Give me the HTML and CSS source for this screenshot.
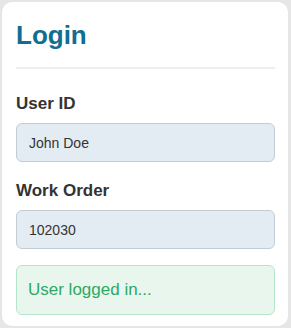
FILE: index.html
```html
<!DOCTYPE html>
<html lang="en">
<head>
    <meta charset="UTF-8">
    <meta name="viewport" content="width=device-width, initial-scale=1.0">
    <title>Login</title>
    <link rel="stylesheet" href="styles.css">
</head>
<body>
    <div class="card">
        <h1 class="title">Login</h1>

        <label class="field-label" for="user-id">User ID</label>
        <input class="field-input" id="user-id" type="text" value="John Doe">

        <label class="field-label" for="work-order">Work Order</label>
        <input class="field-input" id="work-order" type="text" value="102030">

        <div class="status">User logged in...</div>
    </div>
</body>
</html>
```

FILE: styles.css
```css
:root {
    --title-blue: #0f6e91;
    --text-dark: #333333;
    --input-bg: #e4ecf3;
    --input-border: #c3ccd4;
    --ok-bg: #e9f6ed;
    --ok-border: #b5e6c9;
    --ok-text: #2ea866;
}

* {
    box-sizing: border-box;
    margin: 0;
    padding: 0;
}

body {
    font-family: "Liberation Sans", Arial, sans-serif;
    background-color: #e6e6e6;
    padding: 2px 3px 2px 2px;
    color: var(--text-dark);
}

.card {
    background-color: #ffffff;
    border-radius: 10px;
    padding: 18px 13px 11px 14px;
    display: flex;
    flex-direction: column;
    min-height: 324px;
}

.title {
    font-size: 26px;
    font-weight: 700;
    color: var(--title-blue);
    padding-bottom: 16px;
    border-bottom: 2px solid #eeeeee;
    margin-bottom: 25px;
}

.field-label {
    font-size: 17px;
    font-weight: 700;
    color: var(--text-dark);
    margin-bottom: 9px;
}

.field-input {
    font-family: inherit;
    font-size: 14px;
    color: var(--text-dark);
    background-color: var(--input-bg);
    border: 1px solid var(--input-border);
    border-radius: 6px;
    height: 39px;
    padding: 0 12px;
    width: 100%;
    margin-bottom: 19px;
    outline: none;
}

.status {
    margin-top: -3px;
    background-color: var(--ok-bg);
    border: 1px solid var(--ok-border);
    border-radius: 6px;
    color: var(--ok-text);
    font-size: 17px;
    padding: 14px 11px;
}
```
